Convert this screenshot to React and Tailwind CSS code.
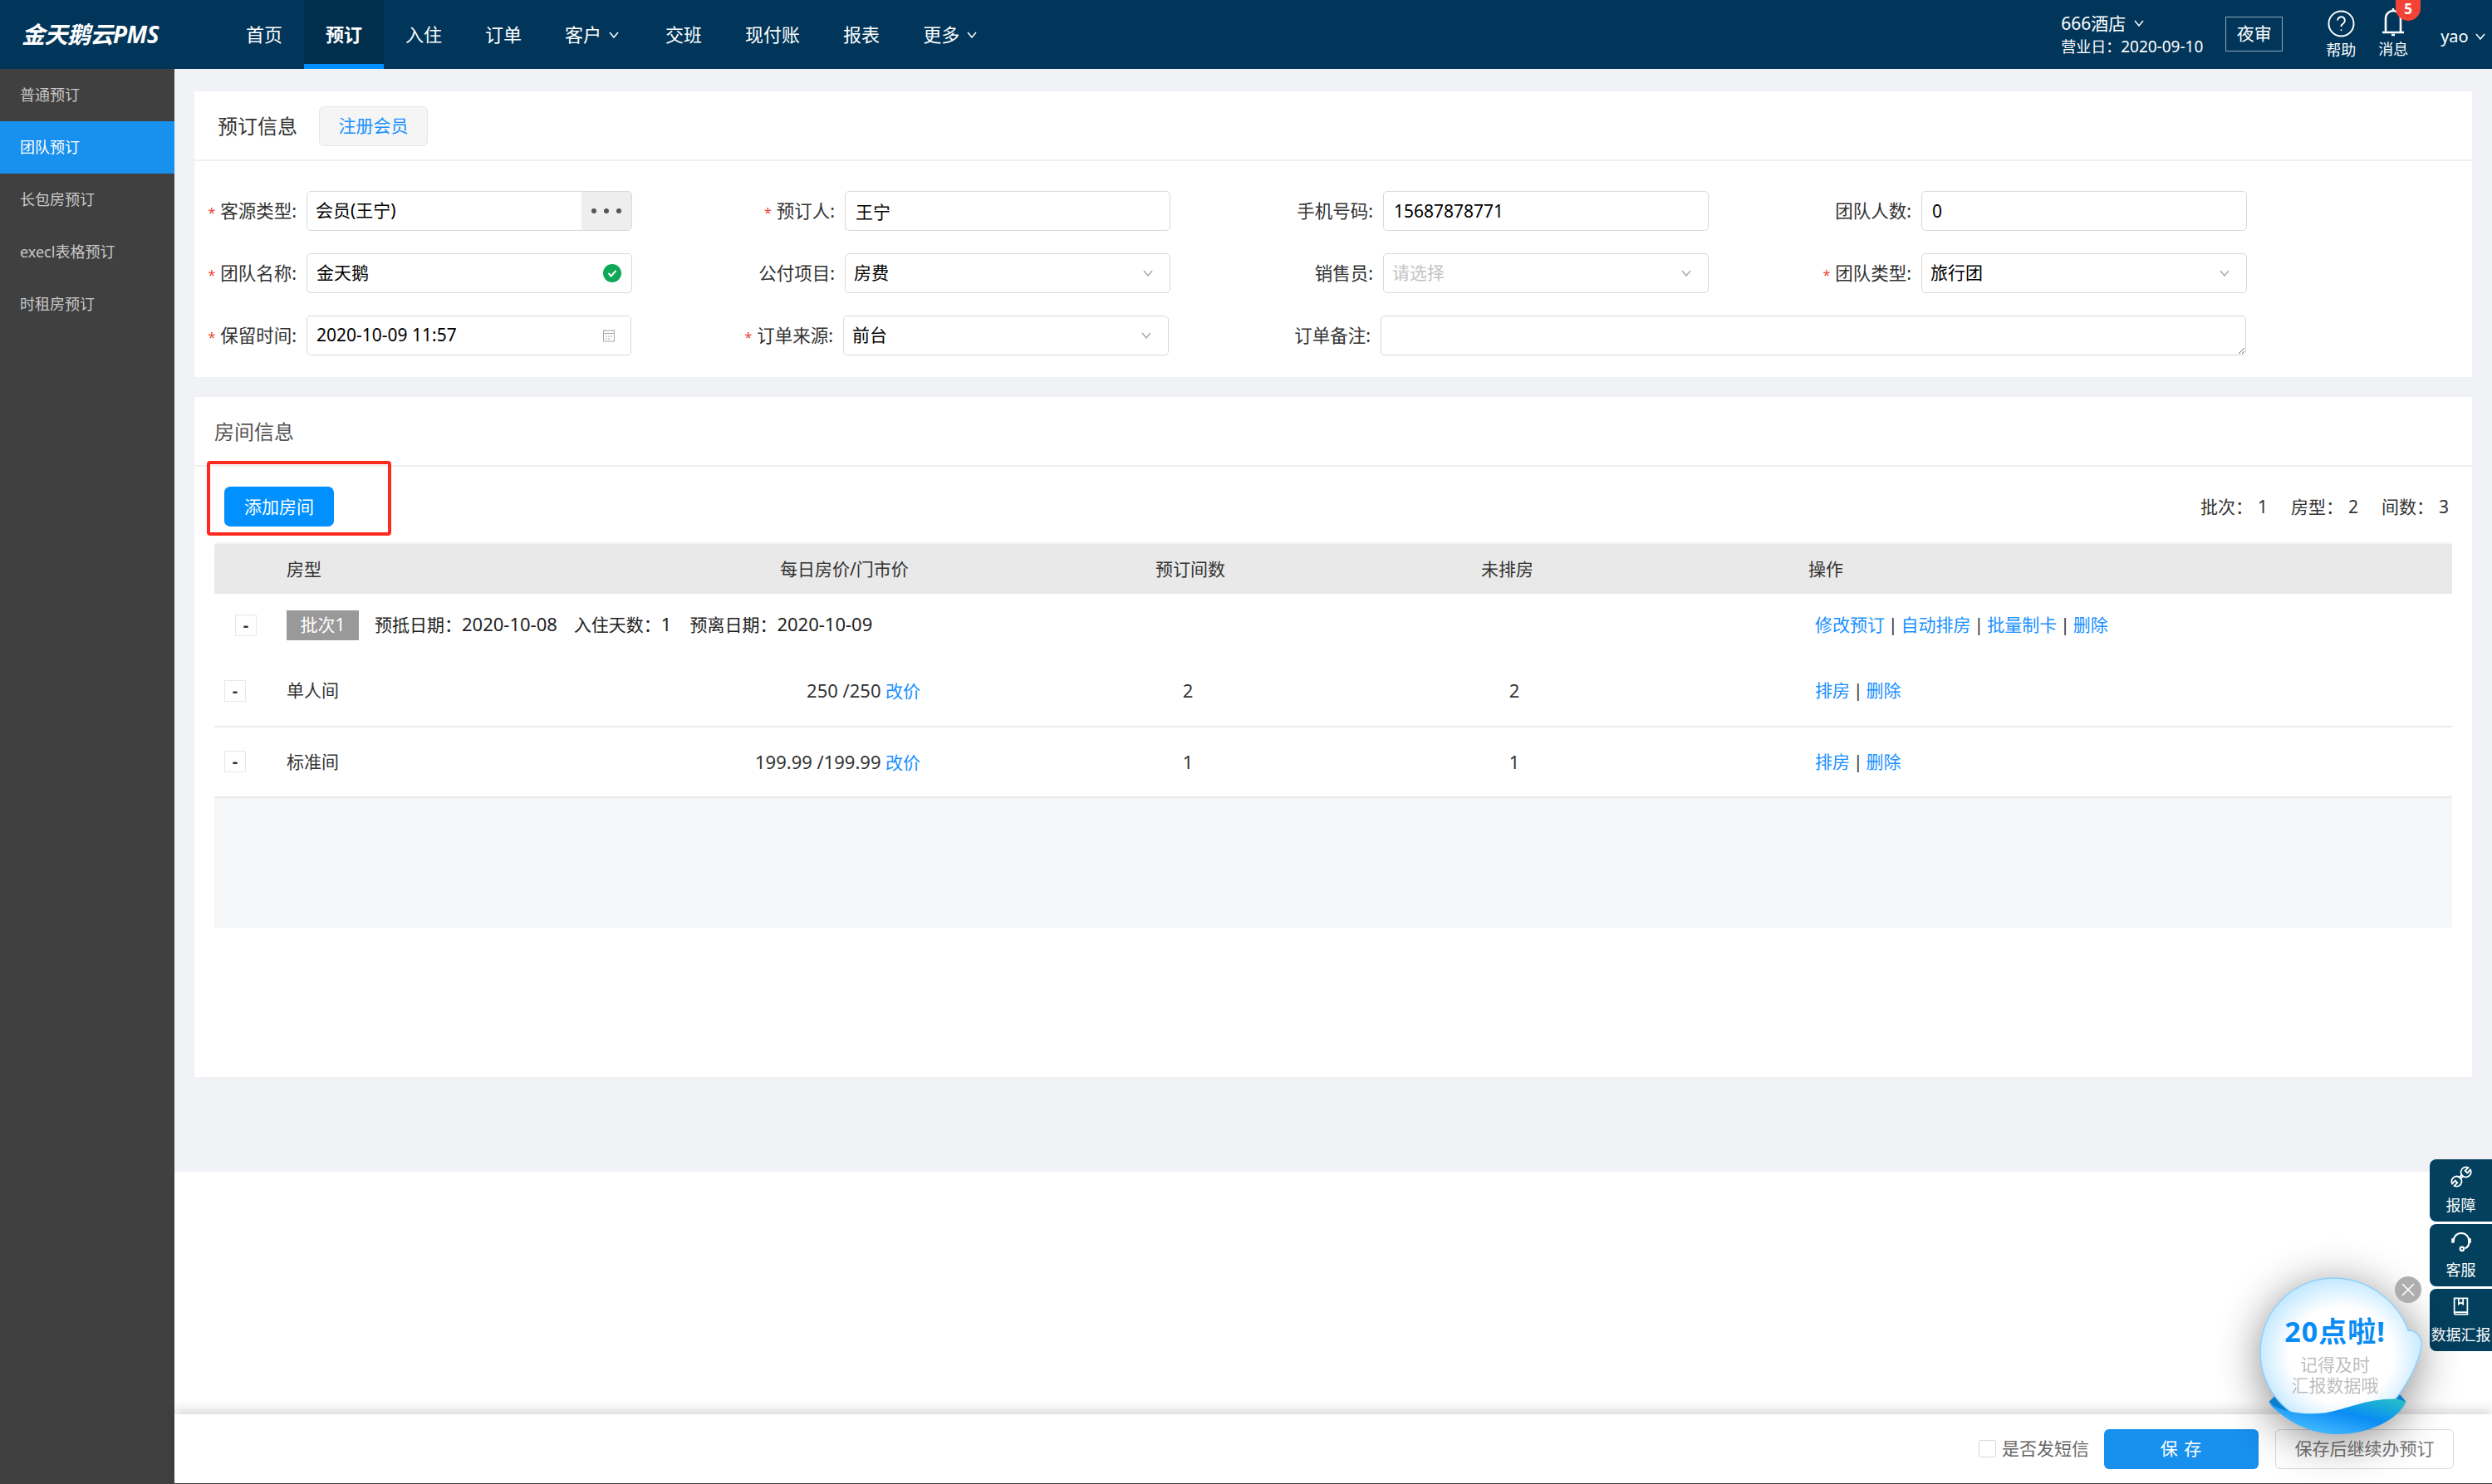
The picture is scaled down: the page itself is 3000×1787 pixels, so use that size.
const navs = [
  { name: "首页" },
  { name: "预订", active: true },
  { name: "入住" },
  { name: "订单" },
  { name: "客户", more: true },
  { name: "交班" },
  { name: "现付账" },
  { name: "报表" },
  { name: "更多", more: true },
];

const menus = ["普通预订", "团队预订", "长包房预订", "execl表格预订", "时租房预订"];

const Arrow = ({ className }) => (
  <svg viewBox="0 0 12 8" fill="none" stroke="currentColor" strokeWidth="1.5" className={className}>
    <path d="M1 1l5 6 5-6" />
  </svg>
);

const Field = ({ label, star, children, className = "" }) => (
  <div className={`flex items-center ${className}`}>
    <div className="w-[124px] shrink-0 whitespace-nowrap pr-[12px] pt-[1px] text-right text-[21.5px] text-[#333]">
      {star && <span className="mr-[6px] text-[16px] text-[#f04134]">*</span>}
      {label}:
    </div>
    {children}
  </div>
);

const Input = ({ value }) => (
  <input
    readOnly
    value={value}
    className="h-[48px] w-[392px] rounded-[5px] border border-[#d9d9d9] px-[12px] text-[21px] text-black outline-none"
  />
);

const Select = ({ value, placeholder }) => (
  <div className="flex h-[48px] w-[392px] items-center justify-between rounded-[5px] border border-[#d9d9d9] pl-[10px] pr-[20px] text-[21px] text-black">
    {value ? <span>{value}</span> : <span className="text-[#c4c4c4]">{placeholder}</span>}
    <Arrow className="h-[8px] w-[12px] text-[#aaa]" />
  </div>
);

const Link = ({ children }) => <a className="text-[#1890ff]">{children}</a>;

const Sep = () => <span className="mx-[4px] text-[#333]">|</span>;

const Minus = ({ className = "" }) => (
  <div className={`flex h-[26px] w-[26px] items-center justify-center border border-[#e8e8e8] text-[20px] font-bold leading-none text-[#333] ${className}`}>-</div>
);

const Row = ({ name, price }) => (
  <div className="flex h-[85.5px] items-center border-b-2 border-b-[#ebebeb] text-[21px] text-[#333]">
    <div className="w-[87px] pl-[12px]">
      <Minus />
    </div>
    <div className="w-[500px]">{name}</div>
    <div className="w-[263px] text-right">
      <span className="text-[22px]">{price}</span> <Link>改价</Link>
    </div>
    <div className="w-[644px] text-center text-[22px]">{name === "单人间" ? 2 : 1}</div>
    <div className="w-[142px] text-center text-[22px]">{name === "单人间" ? 2 : 1}</div>
    <div className="ml-[291px]">
      <Link>排房</Link>
      <Sep />
      <Link>删除</Link>
    </div>
  </div>
);

const SideBtn = ({ label, children }) => (
  <div className="flex h-[75px] w-[75px] flex-col items-center rounded-l-[8px] bg-[#03405e] pt-[7px] text-[18px] leading-[24px] text-white">
    <div className="flex h-[28px] items-center">{children}</div>
    <div className="mt-[8px] whitespace-nowrap">{label}</div>
  </div>
);

export default function App() {
  return (
    <div className="relative flex h-[1787px] w-[3000px] flex-col overflow-hidden bg-white font-['Noto_Sans','Noto_Sans_CJK_SC',sans-serif]">
      {/* top bar */}
      <div className="flex h-[83px] shrink-0 items-stretch bg-[#01365a] text-white">
        <div className="w-[270px] shrink-0 pl-[26px] text-[28px] font-bold italic leading-[82px] tracking-[-0.5px]">金天鹅云PMS</div>
        <div className="flex shrink-0">
          {navs.map((n) => (
            <div
              key={n.name}
              className={`flex shrink-0 items-center whitespace-nowrap px-[26px] text-[22px] ${n.active ? "border-b-[6px] border-b-[#0090ff] bg-[#002f4d] pt-[6px] font-bold" : ""}`}
            >
              {n.name}
              {n.more && <Arrow className="ml-[9px] mr-[4px] h-[8px] w-[12px]" />}
            </div>
          ))}
        </div>
        <div className="ml-[1275px] w-[198px] shrink-0 pt-[14px] leading-[28px]">
          <div className="flex items-center text-[21px]">666酒店<Arrow className="ml-[10px] h-[8px] w-[12px]" /></div>
          <div className="whitespace-nowrap text-[19px]"><span className="text-[18px]">营业日：</span>2020-09-10</div>
        </div>
        <div className="mt-[20px] flex h-[42px] w-[69px] shrink-0 items-center justify-center border border-[#8ea6b8] text-[21px]">夜审</div>
        <div className="ml-[50px] flex w-[40px] shrink-0 flex-col items-center pt-[12px] text-[18px] leading-[24px]">
          <svg viewBox="0 0 34 34" fill="none" stroke="currentColor" strokeWidth="2" className="h-[33px] w-[33px]">
            <circle cx="17" cy="17" r="15.5" />
            <path d="M12.5 13a4.5 4.5 0 1 1 7 3.7c-1.7 1.1-2.5 2-2.5 3.8" />
            <circle cx="17" cy="25" r="1" fill="currentColor" stroke="none" />
          </svg>
          <div className="mt-[3px] whitespace-nowrap">帮助</div>
        </div>
        <div className="relative ml-[23px] flex w-[40px] shrink-0 flex-col items-center pt-[9px] text-[18px] leading-[24px]">
          <svg viewBox="0 0 28 36" fill="none" stroke="currentColor" strokeWidth="2.6" className="h-[36px] w-[28px]">
            <path d="M14 1v3M5 29V13a9 9 0 0 1 18 0v16M1 30h26" />
            <path d="M12 33h4" />
          </svg>
          <div className="mt-[2px] whitespace-nowrap">消息</div>
          <div className="absolute left-[23px] top-0 flex h-[25px] w-[30px] items-center justify-center rounded-b-[15px] bg-[#f44336] pb-[3px] text-[17px] font-bold">5</div>
        </div>
        <div className="ml-[37px] flex shrink-0 items-center pt-[4px] text-[20px]">
          yao
          <Arrow className="ml-[8px] h-[8px] w-[12px]" />
        </div>
      </div>

      <div className="flex min-h-0 flex-1">
        {/* side menu */}
        <div className="w-[210px] shrink-0 bg-[#404040]">
          {menus.map((m) => (
            <div
              key={m}
              className={`flex h-[63px] items-center pl-[24px] text-[18px] ${m === "团队预订" ? "bg-[#1890ee] text-white" : "text-[#c8c8c8]"}`}
            >
              {m}
            </div>
          ))}
        </div>

        <div className="flex min-w-0 flex-1 flex-col">
          {/* gray work area */}
          <div className="flex h-[1328px] shrink-0 flex-col gap-[24px] bg-[#f0f2f5] pl-[24px] pr-[24px] pt-[27px]">
            <div className="h-[344px] bg-white">
              <div className="flex h-[84px] items-center gap-[26px] border-b-2 border-b-[#f0f0f0] pl-[28px] pt-[2px]">
                <div className="text-[24px] text-[#333]">预订信息</div>
                <div className="flex h-[48px] w-[131px] items-center justify-center rounded-[6px] border border-[#e5e5e5] bg-[#f5f5f5] text-[21px] text-[#1890ff]">注册会员</div>
              </div>
              <div className="flex flex-col gap-[27px] pl-[11px] pt-[36px]">
                <div className="flex gap-[132px]">
                  <Field label="客源类型" star>
                    <div className="flex h-[48px] w-[392px] overflow-hidden rounded-[5px] border border-[#d9d9d9] text-[21px] text-black">
                      <div className="flex flex-1 items-center pl-[10px]">会员(王宁)</div>
                      <div className="flex w-[60px] items-center justify-center gap-[9px] bg-[#eeeeee]">
                        <span className="h-[6px] w-[6px] rounded-full bg-[#555]" />
                        <span className="h-[6px] w-[6px] rounded-full bg-[#555]" />
                        <span className="h-[6px] w-[6px] rounded-full bg-[#555]" />
                      </div>
                    </div>
                  </Field>
                  <Field label="预订人" star><Input value="王宁" /></Field>
                  <Field label="手机号码"><Input value="15687878771" /></Field>
                  <Field label="团队人数"><Input value="0" /></Field>
                </div>
                <div className="flex gap-[132px]">
                  <Field label="团队名称" star>
                    <div className="flex h-[48px] w-[392px] items-center justify-between rounded-[5px] border border-[#d9d9d9] pl-[11px] pr-[12px] text-[21px] text-black">
                      <span>金天鹅</span>
                      <svg viewBox="0 0 22 22" className="h-[22px] w-[22px]">
                        <circle cx="11" cy="11" r="11" fill="#0fa858" />
                        <path d="M6.5 11l3.2 3.4 5.8-6.6" fill="none" stroke="#fff" strokeWidth="2" />
                      </svg>
                    </div>
                  </Field>
                  <Field label="公付项目"><Select value="房费" /></Field>
                  <Field label="销售员"><Select placeholder="请选择" /></Field>
                  <Field label="团队类型" star><Select value="旅行团" /></Field>
                </div>
                <div className="flex gap-[132px]">
                  <Field label="保留时间" star>
                    <div className="flex h-[48px] w-[391px] items-center justify-between rounded-[5px] border border-[#d9d9d9] pl-[11px] pr-[18px] text-[21px] text-black">
                      <span>2020-10-09 11:57</span>
                      <svg viewBox="0 0 16 16" fill="none" stroke="#aaa" strokeWidth="1" className="h-[16px] w-[16px]">
                        <rect x="1.5" y="2" width="13" height="13" />
                        <path d="M1.5 5.5h13M4 1v2M12 1v2M4 9h2M7 9h2M10 9h2M4 12h2M7 12h2" />
                      </svg>
                    </div>
                  </Field>
                  <Field label="订单来源" star className="-ml-[1px]"><Select value="前台" /></Field>
                  <Field label="订单备注" className="-ml-[1px]">
                    <textarea readOnly className="h-[48px] w-[1042px] rounded-[5px] border border-[#d9d9d9]" />
                  </Field>
                </div>
              </div>
            </div>

            <div className="h-[819px] bg-white">
              <div className="flex h-[84px] items-center border-b-2 border-b-[#f0f0f0] pl-[24px] pt-[2px] text-[24px] text-[#555]">房间信息</div>
              <div className="relative flex h-[91px] items-start justify-between pl-[36px] pr-[28px] pt-[24px]">
                <div className="flex h-[48px] w-[132px] items-center justify-center rounded-[7px] bg-[#0090ff] pt-[2px] text-[21px] text-white">添加房间</div>
                <div className="flex gap-[28px] pt-[9px] text-[21px] text-[#333]">
                  <span>批次：<span className="ml-[6px]">1</span></span>
                  <span>房型：<span className="ml-[6px]">2</span></span>
                  <span>间数：<span className="ml-[6px]">3</span></span>
                </div>
                <div className="absolute left-[15px] top-[-7px] h-[90px] w-[222px] rounded-[4px] border-[4px] border-[#ff2a1f]" />
              </div>
              <div className="mx-[24px]">
                <div className="flex h-[62px] items-center rounded-t-[4px] border-t-2 border-t-[#f5f5f5] bg-[#e9e9e9] pt-[2px] text-[21px] text-[#333]">
                  <div className="w-[87px]" />
                  <div className="w-[594px]">房型</div>
                  <div className="w-[452px]">每日房价/门市价</div>
                  <div className="w-[392px]">预订间数</div>
                  <div className="w-[394px]">未排房</div>
                  <div>操作</div>
                </div>
                <div className="flex h-[75px] items-center text-[21px] text-[#222]">
                  <div className="w-[87px] pl-[25px]">
                    <Minus className="w-[24px]" />
                  </div>
                  <div className="flex h-[36px] w-[87px] items-center justify-center bg-[#999] text-white">批次1</div>
                  <div className="ml-[19px] flex w-[1734px] whitespace-nowrap">
                    <span>预抵日期：<span className="text-[22px] leading-[21px]">2020-10-08</span></span>
                    <span className="ml-[20px]">入住天数：<span className="text-[22px] leading-[21px]">1</span></span>
                    <span className="ml-[22px]">预离日期：<span className="text-[22px] leading-[21px]">2020-10-09</span></span>
                  </div>
                  <div className="whitespace-nowrap">
                    <Link>修改预订</Link><Sep /><Link>自动排房</Link><Sep /><Link>批量制卡</Link><Sep /><Link>删除</Link>
                  </div>
                </div>
                <Row name="单人间" price="250 /250" />
                <Row name="标准间" price="199.99 /199.99" />
                <div className="h-[156px] bg-[#f5f6f7]" />
              </div>
            </div>
          </div>

          <div className="flex-1" />

          {/* footer */}
          <div className="relative flex h-[84px] shrink-0 items-center justify-end border-b border-b-[#3a3a3a] bg-white pr-[46px] text-[21px] shadow-[0_-6px_12px_rgba(0,0,0,0.14)]">
            <span className="h-[21px] w-[21px] rounded-[3px] border border-[#d9d9d9]" />
            <span className="ml-[7px] text-[#666]">是否发短信</span>
            <div className="ml-[18px] flex h-[48px] w-[186px] items-center justify-center rounded-[6px] bg-[#1890ee] tracking-[1px] text-white">保 存</div>
            <div className="ml-[20px] flex h-[48px] w-[215px] items-center justify-center rounded-[6px] border border-[#d9d9d9] text-[#777]">保存后继续办预订</div>
          </div>
        </div>
      </div>

      {/* side buttons */}
      <div className="absolute right-0 top-[1396px] flex flex-col gap-[3px]">
        <SideBtn label="报障">
          <svg viewBox="0 0 28 28" fill="none" stroke="#fff" strokeWidth="2" className="h-[26px] w-[26px]">
            <path d="M23 2.2A6.5 6.5 0 1 0 25.8 5L21.8 9L19 6.2Z" />
            <path d="M5 25.8A6.5 6.5 0 1 0 2.2 23L6.2 19L9 21.8Z" />
            <path d="M14.8 11.5L11.5 14.8M16.5 13.2L13.2 16.5" />
          </svg>
        </SideBtn>
        <SideBtn label="客服">
          <svg viewBox="0 0 28 28" fill="none" stroke="#fff" strokeWidth="2.4" className="h-[26px] w-[26px]">
            <path d="M4 15V13a10 10 0 0 1 20 0v2a9 9 0 0 1-5 8" />
            <path d="M3 10v6M25 10v6" strokeWidth="3.4" />
            <circle cx="15" cy="23.5" r="2.4" />
          </svg>
        </SideBtn>
        <SideBtn label="数据汇报">
          <svg viewBox="0 0 24 26" fill="none" stroke="#fff" strokeWidth="2" className="h-[24px] w-[21px]">
            <path d="M3 2h18v22H5a2 2 0 0 1-2-2z" />
            <path d="M3 21h18M9 2v8l3-2 3 2V2" />
          </svg>
        </SideBtn>
      </div>

      {/* reminder bubble */}
      <div className="absolute left-[2713px] top-[1533px] h-[200px] w-[207px]">
        <svg viewBox="340 460 620 600" className="absolute inset-0 h-full w-full overflow-visible drop-shadow-[0_8px_26px_rgba(0,0,0,0.45)]">
          <defs>
            <radialGradient id="bubbleFill" cx="50%" cy="52%" r="52%">
              <stop offset="62%" stopColor="#ffffff" />
              <stop offset="100%" stopColor="#c4e9ff" />
            </radialGradient>
            <linearGradient id="waveFill" x1="0%" y1="100%" x2="100%" y2="0%">
              <stop offset="10%" stopColor="#4fc3ff" />
              <stop offset="58%" stopColor="#0a8cf5" />
              <stop offset="100%" stopColor="#28c4c4" />
            </linearGradient>
          </defs>
          <path d="M395 925 L420 900 L870 900 L890 925 L860 950 L430 960 Z" fill="#0a7fd0" />
          <path
            d="M630 478C750 478 860 560 898 668C925 665 948 690 946 722C935 790 890 870 840 930C780 990 700 1012 630 1012C482 1012 364 893 364 745C364 597 482 478 630 478Z"
            fill="url(#bubbleFill)"
            stroke="#8cd0ff"
            strokeWidth="4"
          />
          <path
            d="M395 930C440 960 520 975 600 965C680 950 760 910 860 915L890 925C860 990 760 1042 640 1042C540 1042 450 990 395 930Z"
            fill="url(#waveFill)"
          />
        </svg>
        <div className="absolute left-0 top-[50px] w-[196px] text-center text-[34px] font-bold leading-[40px] tracking-[1px] text-[#0a8cf5]">20点啦!</div>
        <div className="absolute left-0 top-[98px] w-[196px] text-center text-[21px] leading-[25px] text-[#bdbdbd] blur-[0.4px]">
          记得及时
          <br />
          汇报数据哦
        </div>
      </div>
      <div className="absolute left-[2883px] top-[1537px] flex h-[32px] w-[32px] items-center justify-center rounded-full bg-[#aeaeae]">
        <svg viewBox="0 0 16 16" stroke="#fff" strokeWidth="1.6" className="h-[16px] w-[16px]">
          <path d="M1 1l14 14M15 1L1 15" />
        </svg>
      </div>
    </div>
  );
}
